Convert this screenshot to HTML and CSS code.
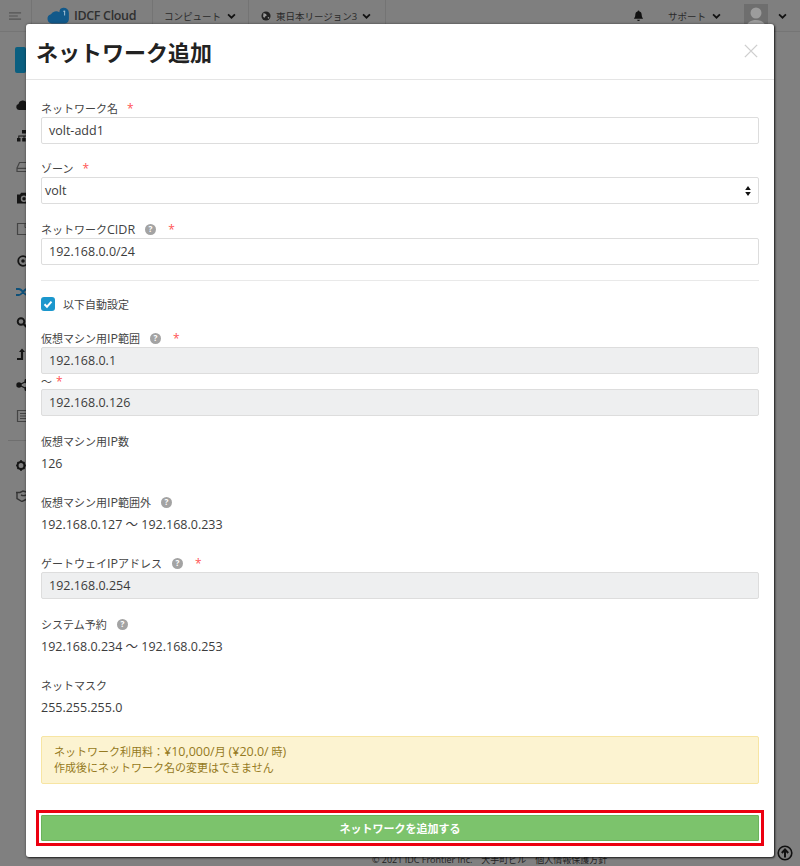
FILE: index.html
```html
<!DOCTYPE html>
<html lang="ja">
<head>
<meta charset="utf-8">
<title>ネットワーク追加</title>
<link rel="stylesheet" href="styles.css">
</head>
<body>
<div class="page">
  <header class="topbar">
    <div class="nav-cell burger-cell">
      <svg class="burger" viewBox="0 0 14 8"><path d="M0 .7h13M0 4h9.500M0 7.300h13" stroke="#555" stroke-width="1.300" fill="none"/></svg>
    </div>
    <div class="nav-cell logo-cell">
      <svg class="logo" viewBox="0 0 24 18"><path d="M5 17.500a5 5 0 0 1-1-9.800A6.500 6.500 0 0 1 13 5.500 4.500 4.500 0 0 1 17 .8a5.500 5.500 0 0 1 6 5.500v7a5 5 0 0 1-5 4.200z" fill="#12598a"/><path d="M18.500 4v5M17 4.500h2" stroke="#a9c6d8" stroke-width="1" fill="none"/></svg>
      <span class="logo-text">IDCF Cloud</span>
    </div>
    <div class="nav-cell menu-cell"><span>コンピュート</span><svg class="chev" viewBox="0 0 10 7"><path d="M1 1.500l4 4 4-4" stroke="#111" stroke-width="2" fill="none"/></svg></div>
    <div class="nav-cell menu-cell region-cell">
      <svg class="globe" viewBox="0 0 12 12"><circle cx="6" cy="6" r="5.500" fill="#222"/><path d="M3 2.500l3 1 1 2-2 1-1 2-1.500-2zM8 7l2 .5-1.500 2.500z" fill="#999"/></svg>
      <span>東日本リージョン3</span><svg class="chev" viewBox="0 0 10 7"><path d="M1 1.500l4 4 4-4" stroke="#111" stroke-width="2" fill="none"/></svg></div>
    <div class="nav-spacer"></div>
    <div class="nav-right">
      <svg class="bell" viewBox="0 0 12 12"><path d="M6 0a1 1 0 0 1 1 1c2 .5 2.500 2 2.500 4 0 2 1 3 1.500 4H1c.5-1 1.500-2 1.500-4 0-2 .5-3.500 2.500-4a1 1 0 0 1 1-1zM4.500 10h3a1.500 1.500 0 0 1-3 0z" fill="#111"/></svg>
      <span class="support">サポート</span><svg class="chev" viewBox="0 0 10 7"><path d="M1 1.500l4 4 4-4" stroke="#111" stroke-width="2" fill="none"/></svg>
      <svg class="avatar" viewBox="0 0 24 24"><rect width="24" height="24" fill="#6e6e6e"/><circle cx="12" cy="9" r="5.500" fill="#9c9c9c"/><path d="M2 24c1-6 5-8 10-8s9 2 10 8z" fill="#9c9c9c"/></svg>
      <svg class="chev" viewBox="0 0 10 7"><path d="M1 1.500l4 4 4-4" stroke="#111" stroke-width="2" fill="none"/></svg>
    </div>
  </header>
  <aside class="sidebar">
    <div class="side-btn"></div>
    <div class="side-row"><svg viewBox="0 0 16 12"><path d="M3 11a3 3 0 0 1-.5-5.900A4.500 4.500 0 0 1 11 4a3.500 3.500 0 0 1 1.500 7z" fill="#151515"/></svg></div>
    <div class="side-row"><svg viewBox="0 0 16 12"><path d="M6 0h4v3.500H6zM1 8h3.500v3.500H1zM6.200 8h3.500v3.500H6.200zM11.500 8H15v3.500h-3.500zM2.300 8V5.500h11V8h-1V6.500H8.500V8h-1V6.500H3.300V8z" fill="#151515"/></svg></div>
    <div class="side-row"><svg viewBox="0 0 16 12"><path d="M1 7l2.500-5.500h9L15 7v3.500H1zM1.500 7.300h13" fill="none" stroke="#444" stroke-width="1.200"/></svg></div>
    <div class="side-row"><svg viewBox="0 0 16 12"><path d="M1 2.500h3L5 .8h6l1 1.700h3v9H1z" fill="#151515"/><circle cx="8" cy="6.800" r="3.200" fill="#808080"/><circle cx="8" cy="6.800" r="1.700" fill="#151515"/></svg></div>
    <div class="side-row"><svg viewBox="0 0 16 12"><path d="M1.500.5h13v11h-13z" fill="none" stroke="#444" stroke-width="1.200"/><path d="M9 .5v4h5" fill="none" stroke="#444"/></svg></div>
    <div class="side-row"><svg viewBox="0 0 16 12"><circle cx="7" cy="6" r="4.800" fill="none" stroke="#151515" stroke-width="1.800"/><circle cx="7" cy="6" r="1.800" fill="#151515"/></svg></div>
    <div class="side-row"><svg viewBox="0 0 16 12"><path d="M0 3h3c3 0 5 6 8 6h4M0 9h3c3 0 5-6 8-6h4" fill="none" stroke="#0e5079" stroke-width="1.800"/></svg></div>
    <div class="side-row"><svg viewBox="0 0 16 12"><circle cx="5" cy="4.500" r="3.300" fill="none" stroke="#151515" stroke-width="1.900"/><path d="M7.500 7l4 3.800" stroke="#151515" stroke-width="2.200"/></svg></div>
    <div class="side-row"><svg class="up" viewBox="0 0 16 12"><path d="M1 11h5V3.500" fill="none" stroke="#151515" stroke-width="2.200"/><path d="M3 4l3-3.500L9 4z" fill="#151515"/></svg></div>
    <div class="side-row"><svg viewBox="0 0 16 12"><circle cx="3" cy="6" r="2.700" fill="#151515"/><circle cx="11" cy="2" r="2.500" fill="#151515"/><circle cx="11" cy="10" r="2.500" fill="#151515"/><path d="M3 6l8-4M3 6l8 4" stroke="#151515" stroke-width="1.300"/></svg></div>
    <div class="side-row"><svg viewBox="0 0 16 12"><path d="M1.500.5h13v11h-13z" fill="none" stroke="#444" stroke-width="1.200"/><path d="M4 3.500h6M4 6h8M4 8.500h8" stroke="#444"/></svg></div>
    <hr class="side-rule">
    <div class="side-row"><svg viewBox="0 0 16 12"><circle cx="5" cy="6.500" r="3.500" fill="none" stroke="#151515" stroke-width="2"/><path d="M5 1v2M5 10v2M.2 6.500h2M7.800 6.500h2M1.500 3l1.400 1.400M7.100 8.600l1.400 1.400M8.500 3L7.100 4.400M2.900 8.600L1.500 10" stroke="#151515" stroke-width="1.500"/></svg></div>
    <div class="side-row"><svg viewBox="0 0 16 12"><path d="M0 2.500h4l3-1.500 5 1.500M1 2.500v6l5 3 6-3M5 5c2 1 3 1 5 0" fill="none" stroke="#333" stroke-width="1.400"/></svg></div>
  </aside>
  <div class="footer-copy">© 2021 IDC Frontier Inc.　大手町ビル　個人情報保護方針</div>
  <svg class="to-top" viewBox="0 0 16 16"><circle cx="8" cy="8" r="6.800" fill="none" stroke="#111" stroke-width="1.600"/><path d="M8 12.500V5M4.800 8L8 4.500 11.200 8" fill="none" stroke="#111" stroke-width="2"/></svg>
</div>

<main class="modal">
  <div class="modal-head">
    <h1>ネットワーク追加</h1>
    <svg class="close" viewBox="0 0 16 16"><path d="M1 1l14 14M15 1L1 15" stroke="#cfcfcf" stroke-width="1.600" fill="none"/></svg>
  </div>
  <div class="modal-body">
    <div class="field f-first">
      <label class="lbl"><span>ネットワーク名</span><span class="req">*</span></label>
      <div class="input">volt-add1</div>
    </div>
    <div class="field f-zone">
      <label class="lbl"><span>ゾーン</span><span class="req">*</span></label>
      <div class="input select"><span>volt</span><svg class="updown" viewBox="0 0 6 10"><path d="M3 0l2.800 4H.2zM3 10L.2 6h5.600z" fill="#111"/></svg></div>
    </div>
    <div class="field">
      <label class="lbl"><span>ネットワーク<span class="lat">CIDR</span></span><svg class="help" viewBox="0 0 12 12"><circle cx="6" cy="6" r="6" fill="#a3a3a3"/><text x="6" y="9.200" text-anchor="middle" class="help-q">?</text></svg><span class="req">*</span></label>
      <div class="input">192.168.0.0/24</div>
    </div>
    <hr class="rule">
    <div class="check-row">
      <span class="check"><svg viewBox="0 0 14 14"><path d="M3.500 7.200l2.500 2.500 4.500-5" stroke="#fff" stroke-width="2" fill="none"/></svg></span>
      <span>以下自動設定</span>
    </div>
    <div class="field f-range">
      <label class="lbl"><span>仮想マシン用<span class="lat">IP</span>範囲</span><svg class="help" viewBox="0 0 12 12"><circle cx="6" cy="6" r="6" fill="#a3a3a3"/><text x="6" y="9.200" text-anchor="middle" class="help-q">?</text></svg><span class="req">*</span></label>
      <div class="input ro">192.168.0.1</div>
      <label class="lbl lbl-tilde"><span>～</span><span class="req req-tight">*</span></label>
      <div class="input ro">192.168.0.126</div>
    </div>
    <div class="stat s-near">
      <div class="lbl"><span>仮想マシン用<span class="lat">IP</span>数</span></div>
      <div class="val">126</div>
    </div>
    <div class="stat">
      <div class="lbl"><span>仮想マシン用<span class="lat">IP</span>範囲外</span><svg class="help" viewBox="0 0 12 12"><circle cx="6" cy="6" r="6" fill="#a3a3a3"/><text x="6" y="9.200" text-anchor="middle" class="help-q">?</text></svg></div>
      <div class="val">192.168.0.127 ～ 192.168.0.233</div>
    </div>
    <div class="field f-gw">
      <label class="lbl"><span>ゲートウェイ<span class="lat">IP</span>アドレス</span><svg class="help" viewBox="0 0 12 12"><circle cx="6" cy="6" r="6" fill="#a3a3a3"/><text x="6" y="9.200" text-anchor="middle" class="help-q">?</text></svg><span class="req">*</span></label>
      <div class="input ro">192.168.0.254</div>
    </div>
    <div class="stat s-near">
      <div class="lbl"><span>システム予約</span><svg class="help" viewBox="0 0 12 12"><circle cx="6" cy="6" r="6" fill="#a3a3a3"/><text x="6" y="9.200" text-anchor="middle" class="help-q">?</text></svg></div>
      <div class="val">192.168.0.234 ～ 192.168.0.253</div>
    </div>
    <div class="stat">
      <div class="lbl"><span>ネットマスク</span></div>
      <div class="val">255.255.255.0</div>
    </div>
    <div class="alert">ネットワーク利用料：<span class="lat">¥10,000/</span>月 <span class="lat">(¥20.0/</span> 時<span class="lat">)</span><br>作成後にネットワーク名の変更はできません</div>
    <div class="highlight"><button class="submit" type="button">ネットワークを追加する</button></div>
  </div>
</main>
</body>
</html>
```
FILE: styles.css
```css
* { box-sizing: border-box; }
html, body { margin: 0; height: 866px; overflow: hidden; }
body {
  font-family: "Open Sans", "Noto Sans CJK JP", sans-serif;
  font-size: 11px;
  color: #444;
  background: #808080;
  position: relative;
}
.page { height: 866px; background: #808080; display: flex; flex-direction: column; position: relative; }
.topbar { height: 32px; display: flex; align-items: center; background: #7f7f7f; border-bottom: 1px solid #757575; color: #2a2a2a; flex: none; font-size: 9.500px; white-space: nowrap; }
.nav-cell { height: 100%; display: flex; align-items: center; border-right: 1px solid #747474; flex: none; }
.burger-cell { width: 32px; justify-content: center; }
.burger { width: 13px; height: 8px; }
.logo-cell { width: 121px; padding-left: 15px; gap: 4px; }
.logo { width: 23px; height: 17px; }
.logo-text { font-size: 12.500px; color: #303030; font-weight: 600; letter-spacing: -.35px; }
.menu-cell { width: 96px; padding-left: 11px; gap: 6px; }
.region-cell { width: 137px; gap: 5px; padding-left: 12px; }
.chev { width: 9px; height: 6px; flex: none; }
.globe { width: 10px; height: 10px; flex: none; }
.nav-spacer { flex: 1; }
.nav-right { display: flex; align-items: center; padding-right: 13px; height: 100%; }
.bell { width: 11px; height: 12px; margin-right: 24px; }
.support { margin-right: 6px; }
.avatar { width: 24px; height: 24px; margin: 0 10px 0 23px; }
.sidebar { flex: 1; display: flex; flex-direction: column; padding-top: 15px; }
.side-btn { width: 11px; height: 26px; margin-left: 15px; background: #0b5f80; border-radius: 2px; margin-bottom: 16px; flex: none; }
.side-row { height: 31.200px; padding-left: 16px; display: flex; align-items: center; flex: none; }
.side-row svg { width: 16px; height: 12px; display: block; }
.side-rule { width: 18px; margin: 8px 0 8px 8px; border: 0; border-top: 1px solid #6f6f6f; flex: none; }
.footer-copy { position: absolute; left: 372px; top: 853px; font-size: 9px; color: #222; white-space: nowrap; }
.to-top { position: absolute; left: 777px; top: 845px; width: 16px; height: 16px; }

.modal { position: absolute; left: 26px; top: 24px; width: 748px; height: 833px; background: #fff; border-radius: 3px; box-shadow: 1px 1px 2px rgba(0,0,0,.7), 0 0 3px rgba(0,0,0,.4); }
.modal-head { height: 56px; display: flex; align-items: center; justify-content: space-between; border-bottom: 1px solid #e5e5e5; padding: 0 16px 2px 10px; }
.modal-head h1 { margin: 0; font-size: 22px; font-weight: 700; color: #222; font-family: "Noto Sans CJK JP", sans-serif; line-height: 30px; }
.close { width: 14px; height: 14px; }
.modal-body { padding: 20px 15px 0; }
.lbl { display: flex; align-items: center; height: 17px; font-size: 11px; color: #444; line-height: 17px; white-space: nowrap; }
.lat { font-size: 12.500px; }
.req { color: #f55; margin-left: 9px; font-size: 12px; }
.req-tight { margin-left: 4px; }
.help { width: 11px; height: 11px; margin-left: 10px; flex: none; }
.help + .req { margin-left: 12px; }
.help-q { fill: #fff; font: 700 9px "Open Sans", sans-serif; }
.field { margin-top: 17px; }
.f-first { margin-top: 0; }
.f-zone { margin-top: 16px; }
.input { height: 27px; border: 1px solid #ddd; border-radius: 2px; padding: 0 7px; display: flex; align-items: center; font-size: 12.500px; color: #3c3c3c; background: #fff; }
.select { padding-left: 3px; justify-content: space-between; padding-right: 7px; }
.updown { width: 6px; height: 10px; }
.ro { background: #eeeff0; }
.rule { border: 0; border-top: 1px solid #e9e9e9; margin: 15px 0 0; }
.check-row { display: flex; align-items: center; gap: 8px; margin-top: 16px; height: 14px; font-size: 11px; color: #444; }
.check { width: 14px; height: 14px; background: #1b97cd; border-radius: 3px; display: block; }
.check svg { display: block; width: 14px; height: 14px; }
.f-range { margin-top: 19px; }
.lbl-tilde { height: 15px; }
.stat { margin-top: 21px; }
.s-near { margin-top: 17px; }
.val { font-size: 12.500px; color: #3c3c3c; margin-top: 4px; line-height: 19px; height: 19px; }
.f-gw { margin-top: 21px; }
.alert { margin-top: 19px; height: 48px; background: #fcf3d1; border: 1px solid #f7e5a3; border-radius: 2px; color: #957a22; font-size: 11px; line-height: 16px; padding: 7px 12px; }
.highlight { margin: 26px -5px 0; height: 36px; border: 3px solid #ec0010; padding: 2px; }
.submit { display: block; width: 100%; height: 100%; background: #7cc36c; border: 1px solid #6bb35c; color: #fff; font: 700 11px "Open Sans", "Noto Sans CJK JP", sans-serif; border-radius: 1px; padding: 0; }
```
